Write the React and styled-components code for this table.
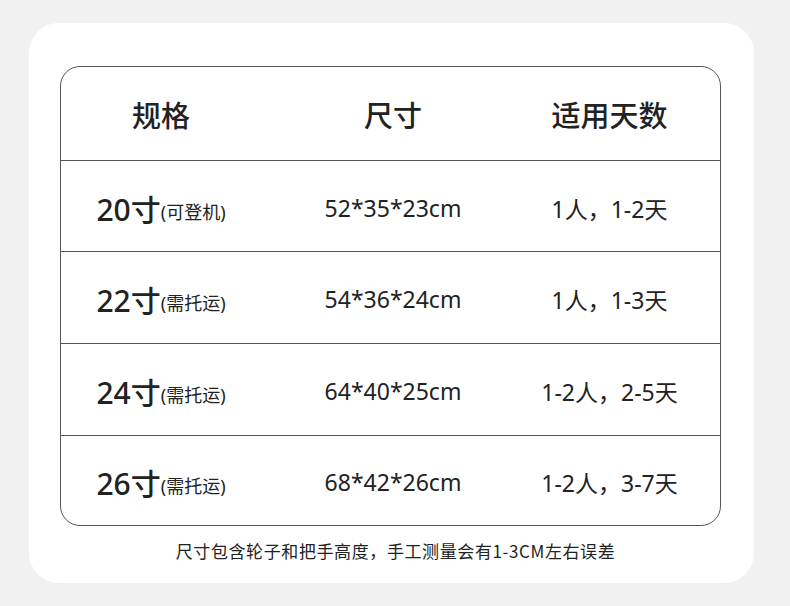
import React from "react";
import styled, { createGlobalStyle } from "styled-components";

const GlobalStyle = createGlobalStyle`
  html, body {
    margin: 0;
    padding: 0;
    background: #f1f1f1;
  }
  body {
    font-family: "Noto Sans", "Noto Sans CJK SC", sans-serif;
    color: #1f1f1f;
  }
`;

const Page = styled.div`
  width: 790px;
  height: 606px;
  padding: 23px 36px 0 29px;
  box-sizing: border-box;
`;

const Card = styled.div`
  background: #ffffff;
  border-radius: 30px;
  height: 560px;
  padding: 43px 33px 0 31px;
  box-sizing: border-box;
`;

const Table = styled.div`
  border: 1px solid #555;
  border-radius: 20px;
  overflow: hidden;
  display: grid;
  grid-template-columns: 200px 264px 1fr;
  grid-template-rows: 94px 91px 92px 92px 89px;
`;

const Cell = styled.div`
  display: flex;
  align-items: center;
  justify-content: center;
  padding-right: ${(p) => (p.$col === 2 ? "26px" : "0")};
  padding-top: ${(p) => (p.$head ? "0" : "3px")};
  border-bottom: ${(p) => (p.$last ? "none" : "1px solid #555")};
  font-size: ${(p) => (p.$head ? "29px" : "23px")};
  font-weight: ${(p) => (p.$head ? 500 : 400)};
  color: #222;
  white-space: nowrap;
`;

const Big = styled.span`
  font-size: 30px;
  font-weight: 500;
`;

const Small = styled.span`
  font-size: 18px;
  margin-top: 6px;
`;

const Note = styled.div`
  text-align: center;
  font-family: "Noto Sans CJK SC", sans-serif;
  font-size: 17px;
  color: #222;
  margin-top: 12px;
  padding-left: 10px;
  letter-spacing: 0.6px;
`;

const rows = [
  ["20寸", "(可登机)", "52*35*23cm", "1人，1-2天"],
  ["22寸", "(需托运)", "54*36*24cm", "1人，1-3天"],
  ["24寸", "(需托运)", "64*40*25cm", "1-2人，2-5天"],
  ["26寸", "(需托运)", "68*42*26cm", "1-2人，3-7天"],
];

export default function App() {
  return (
    <>
      <GlobalStyle />
      <Page>
        <Card>
          <Table>
            <Cell $head>规格</Cell>
            <Cell $head>尺寸</Cell>
            <Cell $head $col={2}>适用天数</Cell>
            {rows.map((r, i) => {
              const last = i === rows.length - 1;
              return (
                <React.Fragment key={r[0]}>
                  <Cell $last={last}>
                    <Big>{r[0]}</Big>
                    <Small>{r[1]}</Small>
                  </Cell>
                  <Cell $last={last}>{r[2]}</Cell>
                  <Cell $last={last} $col={2}>{r[3]}</Cell>
                </React.Fragment>
              );
            })}
          </Table>
          <Note>尺寸包含轮子和把手高度，手工测量会有1-3CM左右误差</Note>
        </Card>
      </Page>
    </>
  );
}
